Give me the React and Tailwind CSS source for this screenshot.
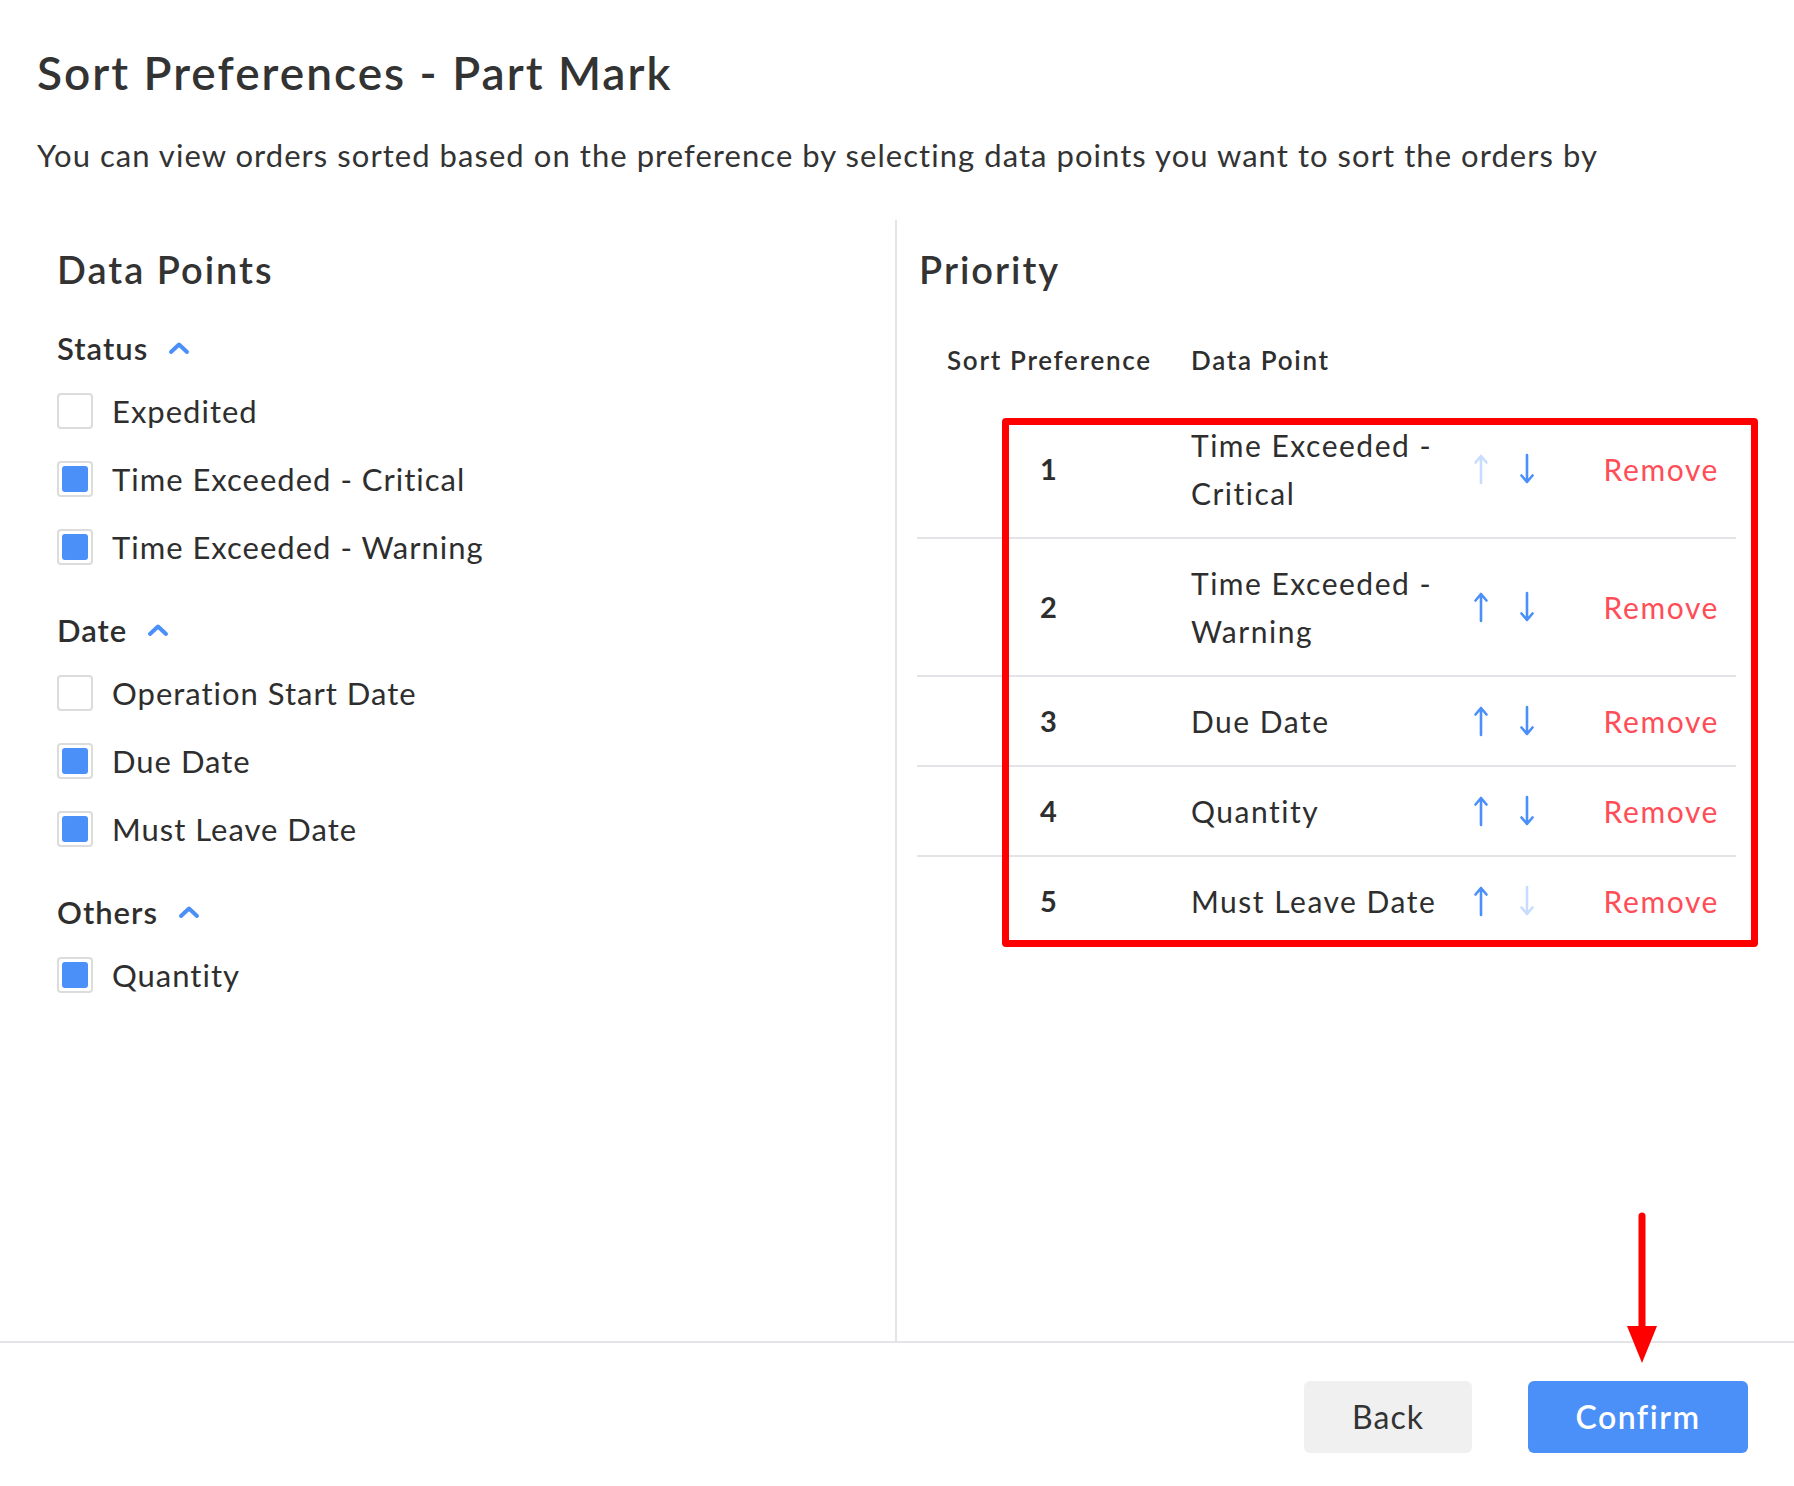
import React from 'react';

const font = { fontFamily: 'Lato, "Open Sans", sans-serif' };

function ChevronUp() {
  return (
    <svg width="22" height="14" viewBox="0 0 22 14" fill="none">
      <path d="M3 11L11 3.5L19 11" stroke="#4b8ff8" strokeWidth="4" strokeLinecap="round" strokeLinejoin="round" />
    </svg>
  );
}

function Arrow({ dir, faded }) {
  const color = faded ? '#c8ddfd' : '#4b8ff8';
  return (
    <svg width="16" height="32" viewBox="0 0 16 32" fill="none">
      {dir === 'up' ? (
        <path d="M8 30V3M2.5 9.5L8 3l5.5 6.5" stroke={color} strokeWidth="2.6" strokeLinecap="round" strokeLinejoin="round" />
      ) : (
        <path d="M8 2v27M2.5 22.5L8 29l5.5-6.5" stroke={color} strokeWidth="2.6" strokeLinecap="round" strokeLinejoin="round" />
      )}
    </svg>
  );
}

function Checkbox({ checked }) {
  return (
    <div className="w-[36px] h-[36px] rounded-[4px] border-2 border-[#dcdcdc] p-[3px] bg-white shrink-0">
      {checked && <div className="w-full h-full rounded-[3px] bg-[#4b8ff8]" />}
    </div>
  );
}

const groups = [
  {
    title: 'Status',
    items: [
      { label: 'Expedited', checked: false },
      { label: 'Time Exceeded - Critical', checked: true },
      { label: 'Time Exceeded - Warning', checked: true },
    ],
  },
  {
    title: 'Date',
    items: [
      { label: 'Operation Start Date', checked: false },
      { label: 'Due Date', checked: true },
      { label: 'Must Leave Date', checked: true },
    ],
  },
  {
    title: 'Others',
    items: [{ label: 'Quantity', checked: true }],
  },
];

const priorities = [
  { label: 'Time Exceeded - Critical' },
  { label: 'Time Exceeded - Warning' },
  { label: 'Due Date' },
  { label: 'Quantity' },
  { label: 'Must Leave Date' },
];

export default function App() {
  return (
    <div className="relative w-[1794px] h-[1486px] bg-white flex flex-col text-[#2e2e2e]" style={font}>
      <div className="pl-[37px] pt-[46px]">
        <h1 className="text-[46px] leading-[53px] font-semibold tracking-[2px] text-[#333]">Sort Preferences - Part Mark</h1>
        <p className="mt-[36px] text-[31px] leading-[40px] tracking-[1.05px] text-[#333]">
          You can view orders sorted based on the preference by selecting data points you want to sort the orders by
        </p>
      </div>

      <div className="flex flex-1 mt-[45px]">
        <div className="w-[897px] border-r-2 border-[#e4e4e8] pl-[57px] pt-[26px]">
          <h2 className="text-[38px] leading-[46px] font-semibold tracking-[2px] text-[#333]">Data Points</h2>
          {groups.map((g, gi) => (
            <div key={g.title} className={gi === 0 ? 'mt-[36px]' : 'mt-[29px]'}>
              <div className="flex items-center gap-[20px] h-[40px]">
                <span className="text-[31px] font-semibold tracking-[1px]">{g.title}</span>
                <ChevronUp />
              </div>
              <div className="mt-[9px]">
                {g.items.map((it) => (
                  <div key={it.label} className="flex items-center gap-[19px] h-[68px]">
                    <Checkbox checked={it.checked} />
                    <span className="text-[31px] tracking-[1px]">{it.label}</span>
                  </div>
                ))}
              </div>
            </div>
          ))}
        </div>

        <div className="flex-1 pl-[20px] pr-[58px] pt-[26px]">
          <h2 className="pl-[2px] text-[38px] leading-[46px] font-semibold tracking-[2px] text-[#333]">Priority</h2>
          <div className="mt-[48px] h-[61px] flex text-[26px] leading-[40px] font-semibold tracking-[1.7px]">
            <div className="w-[274px] pl-[30px]">Sort Preference</div>
            <div>Data Point</div>
          </div>
          {priorities.map((p, i) => (
            <div
              key={p.label}
              className={`flex items-center py-[20px] ${i < priorities.length - 1 ? 'border-b-2 border-[#e4e4e8]' : ''}`}
            >
              <div className="w-[274px] pl-[123px] text-[29px] font-bold">{i + 1}</div>
              <div className="w-[262px] pr-[4px] text-[30px] leading-[48px] tracking-[1.5px]">{p.label}</div>
              <div className="flex items-center gap-[30px] pl-[20px]">
                <Arrow dir="up" faded={i === 0} />
                <Arrow dir="down" faded={i === priorities.length - 1} />
              </div>
              <div className="ml-auto pr-[17px] text-[30px] tracking-[1.6px] text-[#ff4d57]">Remove</div>
            </div>
          ))}
        </div>
      </div>

      <div className="h-[145px] border-t-2 border-[#e4e4e8] flex justify-end items-start pt-[38px] pr-[46px] gap-[56px]">
        <button className="w-[168px] h-[72px] rounded-[6px] bg-[#f0f0f0] text-[32px] tracking-[1px] text-[#333]">Back</button>
        <button className="w-[220px] h-[72px] rounded-[6px] bg-[#4b8ff8] text-[32px] font-semibold tracking-[1.5px] text-white">Confirm</button>
      </div>

      <div className="absolute left-[1002px] top-[418px] w-[756px] h-[529px] border-[7px] border-[#ff0000] rounded-[4px] pointer-events-none" />
      <svg className="absolute left-[1626px] top-[1212px]" width="32" height="152" viewBox="0 0 32 152">
        <path d="M16 4V118" stroke="#ff0000" strokeWidth="7" strokeLinecap="round" />
        <path d="M1 114H31L16 151Z" fill="#ff0000" />
      </svg>
    </div>
  );
}
